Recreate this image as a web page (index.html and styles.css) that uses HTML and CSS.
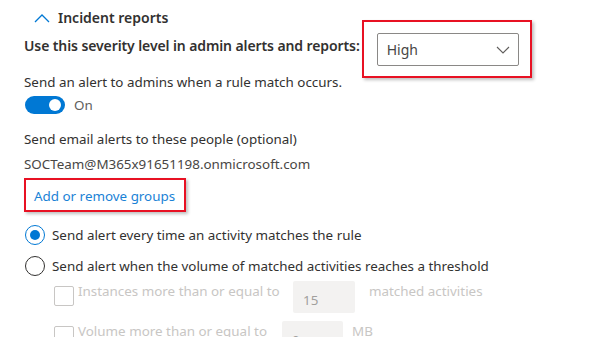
FILE: index.html
```html
<!DOCTYPE html>
<html lang="en">
<head>
    <meta charset="UTF-8">
    <title>Incident reports</title>
    <link rel="stylesheet" href="styles.css">
</head>
<body>
    <div class="panel">
        <!-- Заголовок секции -->
        <div class="section-head">
            <svg class="chevron" width="16" height="10" viewBox="0 0 16 10">
                <path d="M1 9 L8 2 L15 9" fill="none" stroke="#0078d4" stroke-width="1.3"/>
            </svg>
            <span>Incident reports</span>
        </div>

        <div class="severity-row">
            <div class="label-strong">Use this severity level in admin alerts and reports:</div>
            <div class="callout callout-select">
                <div class="select">
                    <span>High</span>
                    <svg width="14" height="8" viewBox="0 0 14 8">
                        <path d="M1 1 L7 7 L13 1" fill="none" stroke="#605e5c" stroke-width="1.1"/>
                    </svg>
                </div>
            </div>
        </div>

        <div class="line alert-line">Send an alert to admins when a rule match occurs.</div>
        <div class="toggle-row">
            <div class="toggle"><div class="knob"></div></div>
            <span>On</span>
        </div>

        <div class="line email-line">Send email alerts to these people (optional)</div>
        <div class="line address">SOCTeam@M365x91651198.onmicrosoft.com</div>

        <div class="callout callout-link">
            <a class="link" href="#">Add or remove groups</a>
        </div>

        <div class="radio-row first">
            <div class="radio checked"></div>
            <span>Send alert every time an activity matches the rule</span>
        </div>
        <div class="radio-row">
            <div class="radio"></div>
            <span>Send alert when the volume of matched activities reaches a threshold</span>
        </div>

        <div class="threshold">
            <div class="check-row">
                <div class="checkbox"></div>
                <span class="check-label">Instances more than or equal to</span>
                <div class="num-input">15</div>
                <span class="unit">matched activities</span>
            </div>
            <div class="check-row second">
                <div class="checkbox"></div>
                <span class="check-label">Volume more than or equal to</span>
                <div class="num-input small">0</div>
                <span class="unit">MB</span>
            </div>
        </div>
    </div>
</body>
</html>
```

FILE: styles.css
```css
body {
    margin: 0;
    background: #ffffff;
}

.panel {
    padding: 6px 0 0 24px;
    font-family: "Noto Sans", "Open Sans", sans-serif;
    font-size: 13.4px;
    line-height: 20px;
    color: #323130;
    height: 337px;
    overflow: hidden;
    box-sizing: border-box;
}

.section-head {
    display: flex;
    align-items: center;
    gap: 8px;
    margin-left: 10px;
    font-size: 14px;
    font-weight: 600;
    height: 24px;
}

.severity-row {
    display: flex;
    align-items: flex-start;
    gap: 2px;
    margin-top: -10px;
}

.label-strong {
    font-size: 14px;
    font-weight: 600;
    letter-spacing: -0.1px;
    padding-top: 16px;
}

.callout {
    border: 2px solid #e81123;
    box-shadow: 2px 2px 3px rgba(0, 0, 0, 0.25);
    box-sizing: border-box;
}

.callout-select {
    width: 170px;
    height: 58px;
    padding: 11px 11px 0 13px;
}

.select {
    display: flex;
    align-items: center;
    justify-content: space-between;
    width: 142px;
    height: 33px;
    box-sizing: border-box;
    border: 1px solid #8a8886;
    border-radius: 2px;
    padding: 0 8px 0 9px;
    font-size: 14px;
    color: #484644;
}

.alert-line {
    margin-top: -6px;
}

.toggle-row {
    display: flex;
    align-items: center;
    gap: 9px;
    margin-top: 3px;
    height: 20px;
    color: #605e5c;
}

.toggle {
    width: 40px;
    height: 18px;
    border-radius: 9px;
    background: #0078d4;
    position: relative;
    margin-left: 1px;
}

.knob {
    position: absolute;
    right: 4px;
    top: 3px;
    width: 12px;
    height: 12px;
    border-radius: 50%;
    background: #ffffff;
}

.email-line {
    margin-top: 14px;
}

.address {
    margin-top: 5px;
    color: #484644;
}

.callout-link {
    width: 162px;
    height: 34px;
    margin-top: 4px;
    padding: 6px 0 0 8px;
}

.link {
    color: #1a82d6;
    text-decoration: none;
}

.radio-row {
    display: flex;
    align-items: center;
    gap: 7px;
    height: 20px;
    margin-top: 11px;
}

.radio-row.first {
    margin-top: 13px;
}

.radio {
    width: 20px;
    height: 20px;
    border: 1px solid #323130;
    border-radius: 50%;
    box-sizing: border-box;
    position: relative;
    margin-left: 1px;
}

.radio.checked {
    border-color: #0078d4;
}

.radio.checked::after {
    content: "";
    position: absolute;
    left: 4px;
    top: 4px;
    width: 10px;
    height: 10px;
    border-radius: 50%;
    background: #0078d4;
}

.threshold {
    padding-left: 30px;
    color: #c8c6c4;
}

.check-row {
    display: flex;
    align-items: flex-start;
    margin-top: 5px;
}

.check-row.second {
    margin-top: 8px;
}

.checkbox {
    width: 20px;
    height: 20px;
    border: 1px solid #c8c6c4;
    border-radius: 2px;
    box-sizing: border-box;
    margin-top: 5px;
}

.check-label {
    margin-left: 4px;
    width: 215px;
}

.num-input {
    width: 62px;
    height: 32px;
    background: #f3f2f1;
    border-radius: 2px;
    box-sizing: border-box;
    padding: 9px 0 0 10px;
    color: #a19f9d;
}

.num-input.small {
    width: 61px;
}

.unit {
    margin-left: 14px;
}

.check-row.second .check-label {
    width: 204px;
}

.check-row.second .unit {
    margin-left: 9px;
}
```
